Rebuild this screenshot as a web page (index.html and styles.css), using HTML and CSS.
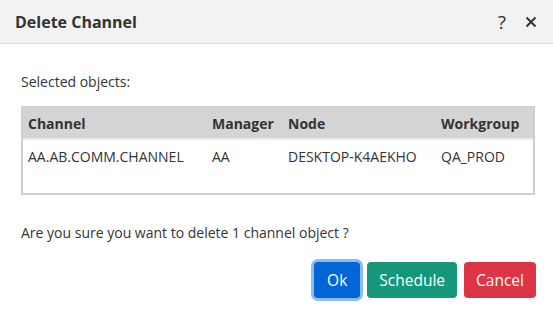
FILE: index.html
```html
<!DOCTYPE html>
<html lang="en">
<head>
    <meta charset="UTF-8">
    <meta name="viewport" content="width=device-width, initial-scale=1.0">
    <title>Delete Channel</title>
    <link rel="stylesheet" href="styles.css">
</head>
<body>

    <div class="dialog">
        <div class="dialog-header">
            <h2>Delete Channel</h2>
            <div class="header-tools">
                <span class="tool">?</span>
                <span class="tool">
                    <svg width="12" height="12" viewBox="0 0 12 12">
                        <path d="M1.5 1.5 L10.5 10.5 M10.5 1.5 L1.5 10.5" stroke="#333" stroke-width="2" fill="none"/>
                    </svg>
                </span>
            </div>
        </div>

        <div class="dialog-body">
            <p class="label">Selected objects:</p>

            <div class="table-box">
                <table>
                    <thead>
                        <tr>
                            <th class="col-channel">Channel</th>
                            <th class="col-manager">Manager</th>
                            <th class="col-node">Node</th>
                            <th>Workgroup</th>
                        </tr>
                    </thead>
                    <tbody>
                        <tr>
                            <td>AA.AB.COMM.CHANNEL</td>
                            <td>AA</td>
                            <td>DESKTOP-K4AEKHO</td>
                            <td>QA_PROD</td>
                        </tr>
                    </tbody>
                </table>
            </div>

            <p class="question">Are you sure you want to delete 1 channel object ?</p>

            <div class="buttons">
                <button class="btn btn-ok">Ok</button>
                <button class="btn btn-schedule">Schedule</button>
                <button class="btn btn-cancel">Cancel</button>
            </div>
        </div>
    </div>

</body>
</html>
```

FILE: styles.css
```css
body {
    font-family: "Open Sans", "Noto Sans", sans-serif;
    font-size: 14px;
    color: #333;
    background: white;
    margin: 0;
    padding: 0;
}
.dialog {
    width: 553px;
    height: 309px;
}
.dialog-header {
    display: flex;
    justify-content: space-between;
    align-items: center;
    height: 44px;
    padding: 0 16px 0 15px;
    background: #f2f2f2;
    border-bottom: 1px solid #dcdcdc;
    box-sizing: border-box;
}
.dialog-header h2 {
    margin: 0;
    font-size: 16px;
    font-weight: bold;
    color: #333;
}
.header-tools {
    display: flex;
    align-items: center;
    gap: 19px;
}
.tool {
    font-size: 19px;
    color: #333;
    display: flex;
    align-items: center;
}
.dialog-body {
    padding: 0 17px 0 21px;
}
.label {
    margin: 28px 0 0 0;
    line-height: 20px;
}
.table-box {
    margin-top: 14px;
    width: 514px;
    height: 89px;
    box-sizing: border-box;
    border: 2px solid #cfcfcf;
    border-top-width: 1px;
}
table {
    width: 100%;
    border-collapse: collapse;
    table-layout: fixed;
}
th {
    background: #d4d4d4;
    text-align: left;
    font-weight: bold;
    height: 29px;
    padding: 2px 5px 0;
    border-bottom: 2px solid #e8ecf0;
}
td {
    height: 32px;
    padding: 0 5px;
}
.col-channel {
    width: 174px;
}
.col-manager {
    width: 66px;
}
.col-node {
    width: 143px;
}
.question {
    margin: 28px 0 0 0;
    line-height: 20px;
}
.buttons {
    display: flex;
    justify-content: flex-end;
    gap: 7px;
    margin-top: 19px;
}
.btn {
    font-family: inherit;
    font-size: 15.5px;
    color: white;
    border: none;
    border-radius: 4px;
    height: 36px;
    padding: 0 12px;
    cursor: pointer;
}
.btn-ok {
    background: #0366d6;
    box-shadow: 0 0 0 3px #8cbcf6;
    padding: 0 13px;
}
.btn-schedule {
    background: #16967a;
}
.btn-cancel {
    background: #dc3545;
}
```
